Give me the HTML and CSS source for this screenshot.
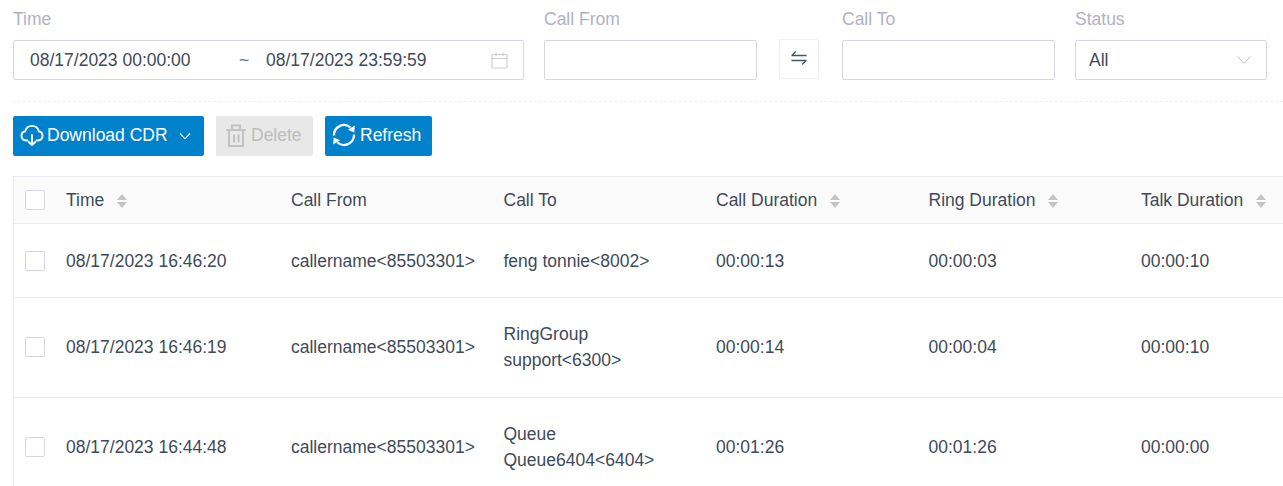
FILE: index.html
```html
<!DOCTYPE html>
<html lang="en">
<head>
<meta charset="utf-8">
<title>CDR</title>
<link rel="stylesheet" href="styles.css">
</head>
<body>
<form class="filters">
  <div class="field f-time">
    <label class="lbl">Time</label>
    <div class="box range">
      <span class="r-start">08/17/2023 00:00:00</span>
      <span class="r-sep">~</span>
      <span class="r-end">08/17/2023 23:59:59</span>
      <svg class="cal" width="17" height="17" viewBox="0 0 17 17" fill="none" stroke="#cfcfcf" stroke-width="1.2"><rect x="1" y="2.500" width="15" height="13.500" rx="0.6"/><path d="M1 6.500h15M5 .5v3.500M12 .5v3.500"/></svg>
    </div>
  </div>
  <div class="field f-from">
    <label class="lbl">Call From</label>
    <div class="box"></div>
  </div>
  <button type="button" class="swap" aria-label="Swap">
    <svg width="16" height="16" viewBox="0 0 16 16" fill="none" stroke="#4a5464" stroke-width="1.300"><path d="M.5 5.500h15M.8 5.500l4-4M15.500 10.500H.5M15.200 10.500l-4 4"/></svg>
  </button>
  <div class="field f-to">
    <label class="lbl">Call To</label>
    <div class="box"></div>
  </div>
  <div class="field f-status">
    <label class="lbl">Status</label>
    <div class="box select">
      <span>All</span>
      <svg width="14" height="14" viewBox="0 0 14 14" fill="none" stroke="#c4c4c4" stroke-width="1"><path d="M.8 3.500 7 10.500l6.200-7"/></svg>
    </div>
  </div>
</form>
<div class="divider"></div>
<div class="actions">
  <button type="button" class="btn btn-dl">
    <svg width="24" height="24" viewBox="0 0 24 24" fill="none" stroke="#fff" stroke-width="1.900" stroke-linecap="round" stroke-linejoin="round"><path d="M7.500 17.500H6A4.700 4.700 0 0 1 5.200 8.200a7 7 0 0 1 13.600 0A4.700 4.700 0 0 1 18 17.500h-1.500"/><path d="M12 12v10M8.800 19 12 22.200 15.200 19"/></svg>
    <span>Download CDR</span>
    <svg class="ic-chev" width="12" height="12" viewBox="0 0 12 12" fill="none" stroke="#fff" stroke-width="1.100"><path d="M1 3.500 6 8.800l5-5.300"/></svg>
  </button>
  <button type="button" class="btn btn-del">
    <svg width="22" height="25" viewBox="0 0 22 25" fill="none" stroke="#c2c2c2" stroke-width="2"><path d="M1 7h20M7 7V2.500h8V7M4 7v16h14V7M9 11.500v8M13.500 11.500v8"/></svg>
    <span>Delete</span>
  </button>
  <button type="button" class="btn btn-ref">
    <svg width="24" height="24" viewBox="0 0 24 24" fill="none" stroke="#fff" stroke-width="2.300"><path d="M2 12.500A10 10 0 0 1 18.500 4.500M22 11.500A10 10 0 0 1 5.500 19.500"/><path d="M22.800 2.500 22.300 9.500 15.800 6.800z" fill="#fff" stroke="none"/><path d="M1.200 21.500 1.700 14.500 8.200 17.200z" fill="#fff" stroke="none"/></svg>
    <span>Refresh</span>
  </button>
</div>
<div class="table-wrap">
  <table class="cdr">
    <colgroup>
      <col class="c-check"><col class="c-time"><col class="c-data"><col class="c-data"><col class="c-data"><col class="c-data"><col class="c-data">
    </colgroup>
    <thead>
      <tr>
        <th><span class="check"></span></th>
        <th><span class="hd">Time<span class="sort"><i class="up"></i><i class="down"></i></span></span></th>
        <th>Call From</th>
        <th>Call To</th>
        <th><span class="hd">Call Duration<span class="sort"><i class="up"></i><i class="down"></i></span></span></th>
        <th><span class="hd">Ring Duration<span class="sort"><i class="up"></i><i class="down"></i></span></span></th>
        <th><span class="hd">Talk Duration<span class="sort"><i class="up"></i><i class="down"></i></span></span></th>
      </tr>
    </thead>
    <tbody>
      <tr class="r1">
        <td><span class="check"></span></td>
        <td>08/17/2023 16:46:20</td>
        <td>callername&lt;85503301&gt;</td>
        <td>feng tonnie&lt;8002&gt;</td>
        <td>00:00:13</td>
        <td>00:00:03</td>
        <td>00:00:10</td>
      </tr>
      <tr class="r2">
        <td><span class="check"></span></td>
        <td>08/17/2023 16:46:19</td>
        <td>callername&lt;85503301&gt;</td>
        <td>RingGroup<br>support&lt;6300&gt;</td>
        <td>00:00:14</td>
        <td>00:00:04</td>
        <td>00:00:10</td>
      </tr>
      <tr class="r2">
        <td><span class="check"></span></td>
        <td>08/17/2023 16:44:48</td>
        <td>callername&lt;85503301&gt;</td>
        <td>Queue<br>Queue6404&lt;6404&gt;</td>
        <td>00:01:26</td>
        <td>00:01:26</td>
        <td>00:00:00</td>
      </tr>
    </tbody>
  </table>
</div>
</body>
</html>
```
FILE: styles.css
```css
* { box-sizing: border-box; }
html, body { margin: 0; height: 486px; overflow: hidden; background: #fff; }
body {
  font-family: "Liberation Sans", Arial, sans-serif;
  font-size: 17.5px;
  color: #3f4a5a;
  padding-top: 7px;
}
.filters { display: flex; align-items: flex-start; padding-left: 13px; }
.field { display: flex; flex-direction: column; }
.lbl { display: block; height: 33px; line-height: 24px; color: #b0b3c4; }
.f-time { width: 511px; margin-right: 20px; }
.f-from { width: 213px; margin-right: 22px; }
.f-to { width: 213px; margin-right: 20px; }
.f-status { width: 192px; }
.box {
  height: 40px;
  border: 1px solid #d6d5e3;
  border-radius: 2px;
  background: #fff;
}
.range { display: flex; align-items: center; padding: 0 15px 0 16px; }
.r-start { width: 209px; }
.r-sep { width: 27px; color: #6b7280; }
.cal { margin-left: auto; }
.select { display: flex; align-items: center; justify-content: space-between; padding: 0 15px 0 13px; }
.swap {
  width: 40px;
  height: 40px;
  margin: 32px 23px 0 0;
  padding: 0 0 2px;
  border: 1px solid #eeeef3;
  border-radius: 2px;
  background: #fff;
  display: flex;
  align-items: center;
  justify-content: center;
}
.divider { margin: 21px 0 0 13px; border-top: 1px dashed #f0f0f4; height: 0; }
.actions { display: flex; gap: 12px; padding: 14px 0 0 13px; }
.btn {
  height: 40px;
  border: 0;
  border-radius: 2px;
  padding: 0 0 2px;
  display: flex;
  align-items: center;
  font: inherit;
  color: #fff;
  background: #0081cc;
}
.btn svg { flex: none; }
.btn-dl { width: 191px; padding-left: 7px; }
.btn-dl span { margin-left: 3px; }
.ic-chev { margin: 2px 0 0 11px; }
.btn-del { width: 97px; background: #e8e8e8; color: #bdbdbd; padding-left: 9px; }
.btn-del span { margin-left: 4px; }
.btn-ref { width: 107px; padding-left: 7px; }
.btn-ref span { margin-left: 4px; }
.table-wrap { margin: 20px 0 0 13px; overflow: hidden; }
.cdr { table-layout: fixed; width: 1328px; border-collapse: collapse; border-top: 1px solid #ecebf2; border-left: 1px solid #ecebf2; }
.c-check { width: 40.500px; }
.c-time { width: 225px; }
.c-data { width: 212.500px; }
.cdr th, .cdr td { padding: 0 12px; text-align: left; font-weight: normal; border-bottom: 1px solid #ecebf2; line-height: 26px; }
.cdr th { height: 47px; background: #fbfbfb; }
.r1 td { height: 74px; }
.r2 td { height: 100px; padding-bottom: 2px; }
.cdr th:first-child, .cdr td:first-child { padding: 0 0 0 11px; }
.cdr .r2 td:first-child { padding-bottom: 2px; }
.hd { display: flex; align-items: center; }
.check {
  display: block;
  width: 20px;
  height: 20px;
  border: 1px solid #d6d5e3;
  border-radius: 2px;
  background: #fff;
}
.sort { display: flex; flex-direction: column; gap: 2px; margin: 2px 0 0 12.500px; }
.sort i { display: block; width: 0; height: 0; border-left: 5.500px solid transparent; border-right: 5.500px solid transparent; }
.sort .up { border-bottom: 6px solid #c4c4c4; }
.sort .down { border-top: 6px solid #c4c4c4; }
```
